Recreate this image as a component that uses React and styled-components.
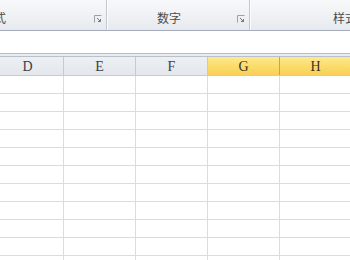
import React from "react";
import styled, {createGlobalStyle} from "styled-components";

const GlobalStyle = createGlobalStyle`
html, body {
    margin: 0;
    padding: 0;
    background: #ffffff;
    overflow: hidden;
}
`

const Page = styled.div`
width: 350px;
height: 260px;
overflow: hidden;
display: flex;
flex-direction: column;
font-family: "Noto Sans CJK SC", "Liberation Sans", sans-serif;
`

const Ribbon = styled.div`
display: flex;
height: 30px;
flex: none;
background: linear-gradient(to bottom, #f7f8fa 0%, #eef0f3 60%, #e6e9ee 100%);
border-bottom: 1px solid #a3acb8;
overflow: hidden;
`

const Group = styled.div`
flex: none;
width: ${props => props.width}px;
display: flex;
align-items: center;
padding-top: 6px;
box-sizing: border-box;
border-right: ${props => props.last ? "none" : "1px solid #c3c9d1"};
box-shadow: ${props => props.last ? "none" : "1px 0 0 #fbfcfd"};
`

const GroupLabel = styled.span`
flex: none;
margin-left: ${props => props.offset}px;
font-size: 12px;
line-height: 14px;
color: #4c4c4c;
white-space: nowrap;
`

const Launcher = styled.svg`
flex: none;
margin-left: auto;
margin-right: 4px;
margin-top: 2px;
`

const DialogLauncher = () => (
    <Launcher width="8" height="8" viewBox="0 0 8 8">
        <path d="M0.5 7.5 V0.5 H7.5" fill="none" stroke="#9aa1aa" strokeWidth="1"/>
        <path d="M3 3 L6.5 6.5 M4 6.5 H6.5 V4" fill="none" stroke="#6f7680" strokeWidth="1"/>
    </Launcher>
)

const FormulaBar = styled.div`
height: 22px;
flex: none;
background: #ffffff;
border-bottom: 1px solid #b6bcc6;
`

const Gap = styled.div`
height: 2px;
flex: none;
background: #e9edf2;
`

const Sheet = styled.div`
flex: 1;
overflow: hidden;
`

const HeaderRow = styled.div`
display: flex;
height: 18px;
margin-left: -8px;
border-top: 1px solid #b9c0ca;
border-bottom: 1px solid #c6ccd4;
`

const HeaderCell = styled.div`
flex: none;
width: 72px;
box-sizing: border-box;
display: flex;
align-items: center;
justify-content: center;
padding-top: 1px;
font-family: "Liberation Serif", "DejaVu Serif", serif;
font-size: 14px;
color: ${props => props.active ? "#3a3222" : "#3a3f46"};
background: ${props => props.active
    ? "linear-gradient(to bottom, #fde98f 0%, #fbdc6c 50%, #f8d056 100%)"
    : "linear-gradient(to bottom, #eceff3 0%, #e3e7ec 100%)"};
border-right: 1px solid ${props => props.active ? "#c8a646" : "#c4cad3"};
`

const Row = styled.div`
display: flex;
height: 17px;
margin-left: -8px;
border-bottom: 1px solid #dadcdd;
`

const Cell = styled.div`
flex: none;
width: 72px;
box-sizing: border-box;
border-right: 1px solid #dadcdd;
`

const columns = [
    {name: "D"},
    {name: "E"},
    {name: "F"},
    {name: "G", active: true},
    {name: "H", active: true},
];

const rows = Array.from({length: 11}, (_, i) => i);

export default function App() {
    return (
        <Page>
            <GlobalStyle/>
            <Ribbon>
                <Group width={107}>
                    <GroupLabel offset={-42}>对齐方式</GroupLabel>
                    <DialogLauncher/>
                </Group>
                <Group width={143}>
                    <GroupLabel offset={50}>数字</GroupLabel>
                    <DialogLauncher/>
                </Group>
                <Group width={120} last>
                    <GroupLabel offset={83}>样式</GroupLabel>
                </Group>
            </Ribbon>
            <FormulaBar/>
            <Gap/>
            <Sheet>
                <HeaderRow>
                    {columns.map(col => (
                        <HeaderCell key={col.name} active={col.active}>{col.name}</HeaderCell>
                    ))}
                </HeaderRow>
                {rows.map(r => (
                    <Row key={r}>
                        {columns.map(col => <Cell key={col.name}/>)}
                    </Row>
                ))}
            </Sheet>
        </Page>
    );
}
